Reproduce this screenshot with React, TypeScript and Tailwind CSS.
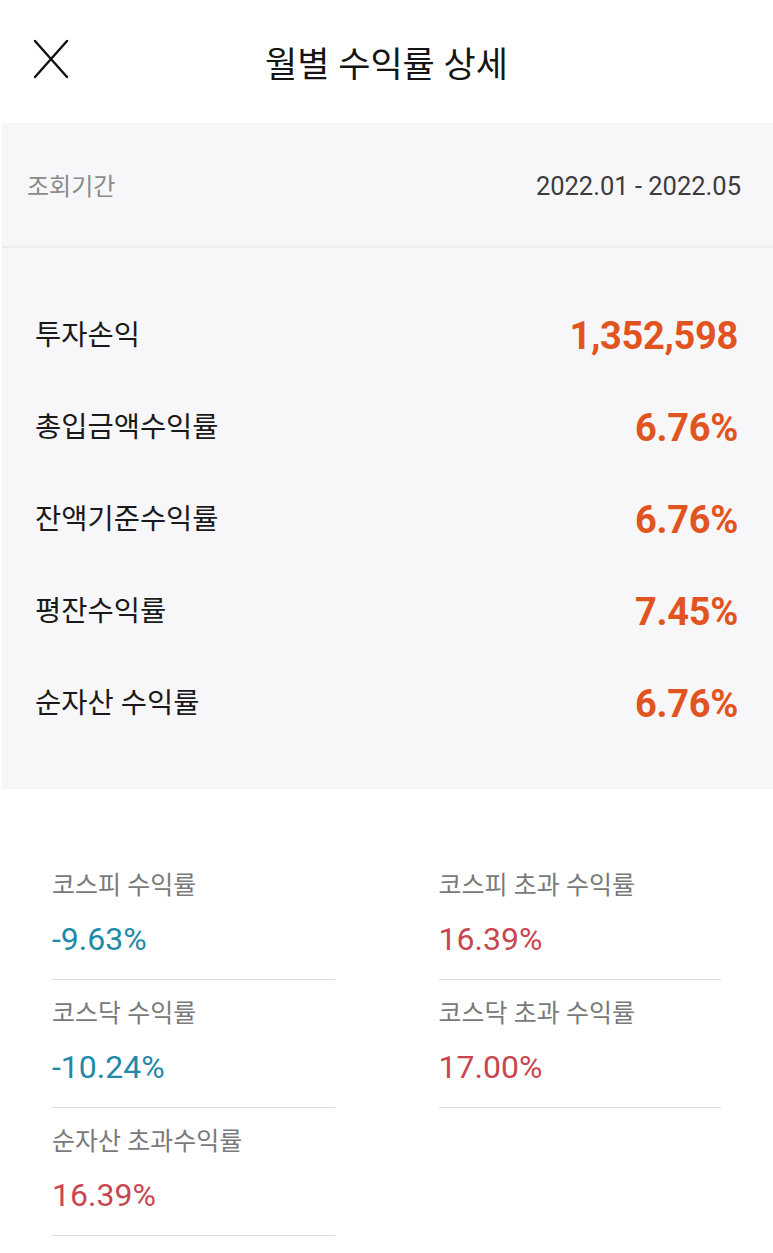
import React from 'react';

const FONT = "font-['Roboto','Noto_Sans_CJK_KR',sans-serif]";

type Summary = { label: string; value: string };
type Bench = { label: string; value: string; tone: 'up' | 'down' };

const summary: Summary[] = [
  { label: '투자손익', value: '1,352,598' },
  { label: '총입금액수익률', value: '6.76%' },
  { label: '잔액기준수익률', value: '6.76%' },
  { label: '평잔수익률', value: '7.45%' },
  { label: '순자산 수익률', value: '6.76%' },
];

const benches: Bench[] = [
  { label: '코스피 수익률', value: '-9.63%', tone: 'down' },
  { label: '코스피 초과 수익률', value: '16.39%', tone: 'up' },
  { label: '코스닥 수익률', value: '-10.24%', tone: 'down' },
  { label: '코스닥 초과 수익률', value: '17.00%', tone: 'up' },
  { label: '순자산 초과수익률', value: '16.39%', tone: 'up' },
];

const CloseIcon: React.FC = () => (
  <svg width="36" height="40" viewBox="0 0 36 40" fill="none">
    <path d="M2 2L34 38M34 2L2 38" stroke="#111" strokeWidth="2.4" strokeLinecap="round" />
  </svg>
);

const App: React.FC = () => {
  return (
    <div className={`w-[773px] min-h-[1253px] bg-white ${FONT}`}>
      <header className="relative h-[123px] flex items-center justify-center pt-[7px]">
        <button className="absolute left-[33px] top-[39px]">
          <CloseIcon />
        </button>
        <h1 className="text-[35px] font-normal text-[#151515] leading-none">월별 수익률 상세</h1>
      </header>

      <section className="ml-[2px] bg-[#f7f7f9] shadow-[0_1px_1px_rgba(0,0,0,0.05)]">
        <div className="h-[125px] flex items-center justify-between pl-[25px] pr-[32px] pt-[4px] border-b-2 border-[#ececee]">
          <span className="text-[24px] text-[#8a8a8a]">조회기간</span>
          <span className="text-[25.5px] text-[#3c3c3c]">2022.01 - 2022.05</span>
        </div>

        <div className="pt-[42px] pb-[38px] pl-[33px] pr-[35px]">
          {summary.map(row => (
            <div key={row.label} className="h-[92px] flex items-center justify-between">
              <span className="text-[28.5px] text-[#1a1a1a]">{row.label}</span>
              <span className="text-[38px] font-bold text-[#e1541f] tracking-[-0.3px]">{row.value}</span>
            </div>
          ))}
        </div>
      </section>

      <section className="grid grid-cols-2 gap-x-[104px] px-[52px] pt-[64px]">
        {benches.map(item => (
          <div key={item.label} className="pt-[19px] pb-[20px] border-b border-[#dedede]">
            <div className="h-[30px] flex items-center text-[25px] text-[#7a7a7a]">{item.label}</div>
            <div
              className={`mt-[18px] h-[40px] flex items-center text-[32px] ${
                item.tone === 'down' ? 'text-[#1f8aa7]' : 'text-[#c8474f]'
              }`}
            >
              {item.value}
            </div>
          </div>
        ))}
      </section>
    </div>
  );
};

export default App;
